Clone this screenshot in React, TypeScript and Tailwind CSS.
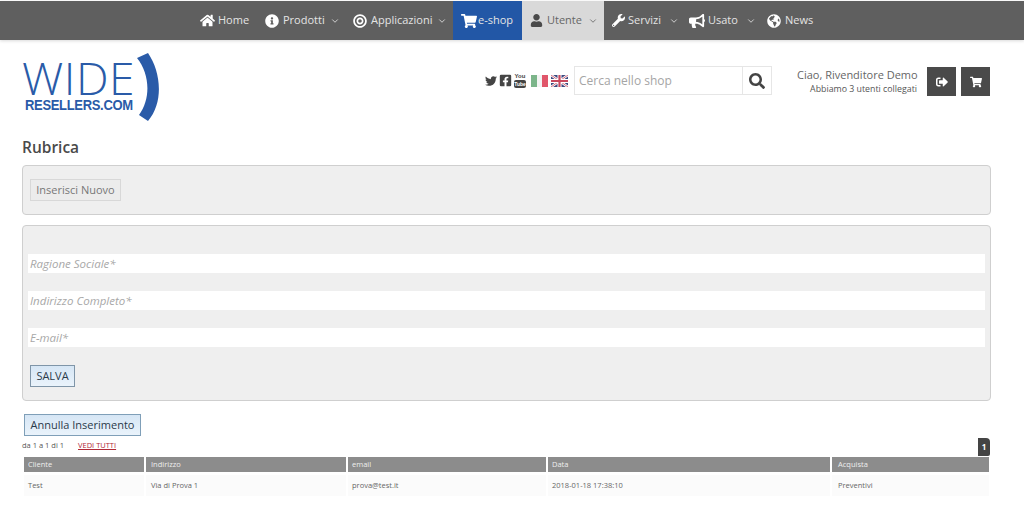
import React from 'react';
import { ChevronDown } from 'lucide-react';
import {
  FaHome, FaInfoCircle, FaShoppingCart, FaUser, FaWrench, FaBullhorn, FaGlobeAmericas,
  FaTwitter, FaFacebookSquare, FaSearch, FaSignOutAlt, FaBullseye,
} from 'react-icons/fa';

// voci del menu principale
const NAV = [
  { label: 'Home', icon: FaHome, iconSize: 15, gap: 'gap-[3px]', ml: 'ml-[200px]', w: 'w-[50px]', caret: false },
  { label: 'Prodotti', icon: FaInfoCircle, iconSize: 14, gap: 'gap-[4px]', ml: 'ml-[15px]', w: 'w-[73px]', caret: true },
  { label: 'Applicazioni', icon: FaBullseye, iconSize: 14, gap: 'gap-[4px]', ml: 'ml-[15px]', w: 'w-[91px]', caret: true },
];

const NAV_RIGHT = [
  { label: 'Servizi', icon: FaWrench, iconSize: 13, gap: 'gap-[3px]', ml: 'ml-[8px]', w: 'w-[65px]', caret: true },
  { label: 'Usato', icon: FaBullhorn, iconSize: 16, gap: 'gap-[3px]', ml: 'ml-[12px]', w: 'w-[64px]', caret: true },
  { label: 'News', icon: FaGlobeAmericas, iconSize: 14, gap: 'gap-[4px]', ml: 'ml-[14px]', w: 'w-[46px]', caret: false },
];

const COLS = [
  { label: 'Cliente', pad: 'pl-[4px]' },
  { label: 'Indirizzo', pad: 'pl-[5px]' },
  { label: 'email', pad: 'pl-[4px]' },
  { label: 'Data', pad: 'pl-[4px]' },
  { label: 'Acquista', pad: 'pl-[6px]' },
];
const ROW = ['Test', 'Via di Prova 1', 'prova@test.it', '2018-01-18 17:38:10', 'Preventivi'];

function Logo() {
  return (
    <div className="relative w-[140px] h-[72px] ml-[22px] mt-[12px] shrink-0">
      <div className="absolute left-0 top-[6px] text-[#2a5ba8] text-[44px] leading-[40px] font-[350] tracking-[0.5px] font-['Open_Sans',sans-serif] origin-left scale-x-[1.05]">
        WIDE
      </div>
      <div className="absolute left-[3px] top-[45px] text-[#2a5ba8] text-[15.5px] leading-[16px] font-bold font-['Liberation_Sans',sans-serif] tracking-[-0.4px] origin-left scale-x-[0.84] whitespace-nowrap">
        RESELLERS.COM
      </div>
      <svg className="absolute left-[112px] top-0" width="28" height="72" viewBox="0 0 28 72">
        <path d="M3 6 L14 1 C27 20 30 50 14 69 L5 63 C17 47 16 22 3 6 Z" fill="#2a5ba8" />
      </svg>
    </div>
  );
}

function Flags() {
  return (
    <div className="flex items-center gap-[3px] ml-[4px]">
      <div className="flex w-[17px] h-[12px]">
        <div className="w-[6px] bg-[#7cb58a]" />
        <div className="w-[5px] bg-[#f4f4f4]" />
        <div className="w-[6px] bg-[#e0566a]" />
      </div>
      <svg width="17" height="12" viewBox="0 0 17 12">
        <rect width="17" height="12" fill="#3d4a80" />
        <path d="M0 0 L17 12 M17 0 L0 12" stroke="#fff" strokeWidth="2.4" />
        <path d="M0 0 L17 12 M17 0 L0 12" stroke="#c8485e" strokeWidth="0.8" />
        <path d="M8.5 0 V12 M0 6 H17" stroke="#fff" strokeWidth="4" />
        <path d="M8.5 0 V12 M0 6 H17" stroke="#c8485e" strokeWidth="2.2" />
      </svg>
    </div>
  );
}

function Youtube() {
  return (
    <div className="flex flex-col items-center w-[12px] h-[15px] text-[#444] font-['Liberation_Sans',sans-serif] font-bold">
      <span className="text-[6px] leading-[6px]">You</span>
      <span className="bg-[#444] text-white rounded-[2px] w-full h-[8px] mt-[1px] text-[5px] leading-[8px] text-center">Tube</span>
    </div>
  );
}

export default function App() {
  return (
    <div className="w-[1024px] h-[512px] overflow-hidden bg-white font-['Open_Sans',sans-serif] text-[#444]">
      {/* --- menu --- */}
      <nav className="flex mt-px h-[39px] relative bg-[#5f5f5f] text-[11px] shadow-[0_1px_3px_rgba(0,0,0,0.15)]">
        {NAV.map((n) => (
          <div key={n.label} className={`flex items-center ${n.gap} ${n.ml} ${n.w} text-[#e4e4e4]`}>
            <n.icon size={n.iconSize} className="shrink-0 text-white" />
            <span>{n.label}</span>
            {n.caret && <ChevronDown size={10} className="ml-px shrink-0" />}
          </div>
        ))}
        <div className="ml-[9px] w-[69px] bg-[#2257a6] flex items-center gap-[1px] pl-[8px] text-[#e4e4e4]">
          <FaShoppingCart size={16} className="text-white shrink-0" />
          <span>e-shop</span>
        </div>
        <div className="w-[82px] bg-[#d9d9d9] flex items-center gap-[4px] pl-[8px] text-[#666]">
          <FaUser size={13} className="text-[#4a4a4a] shrink-0" />
          <span>Utente</span>
          <ChevronDown size={10} className="ml-[2px] shrink-0" />
        </div>
        {NAV_RIGHT.map((n) => (
          <div key={n.label} className={`flex items-center ${n.gap} ${n.ml} ${n.w} text-[#e4e4e4]`}>
            <n.icon size={n.iconSize} className="shrink-0 text-white" />
            <span>{n.label}</span>
            {n.caret && <ChevronDown size={10} className="ml-[5px] shrink-0" />}
          </div>
        ))}
      </nav>

      {/* --- testata --- */}
      <header className="flex h-[90px]">
        <Logo />
        <div className="flex items-center self-start mt-[26px] ml-[323px] h-[29px]">
          <div className="flex items-center gap-[2px] text-[#444] w-[42px]">
            <FaTwitter size={12} />
            <FaFacebookSquare size={13} />
            <Youtube />
          </div>
          <Flags />
          <div className="ml-[6px] w-[198px] h-[29px] border border-[#e6e6e6] flex">
            <div className="flex-1 pl-[4px] text-[12px] leading-[27px] text-[#a5a5a5]">Cerca nello shop</div>
            <div className="w-[29px] border-l border-[#e6e6e6] flex items-center justify-center">
              <FaSearch size={16} className="text-[#444]" />
            </div>
          </div>
        </div>
        <div className="mt-[28px] ml-[25px] w-[120px] text-right">
          <div className="text-[11px] leading-[14px] text-[#666] whitespace-nowrap">Ciao, Rivenditore Demo</div>
          <div className="text-[8.8px] leading-[14px] text-[#555] whitespace-nowrap">Abbiamo 3 utenti collegati</div>
        </div>
        <div className="flex gap-[5px] ml-[10px] mt-[27px] self-start">
          <div className="w-[29px] h-[29px] bg-[#4a4a4a] flex items-center justify-center text-white">
            <FaSignOutAlt size={12} />
          </div>
          <div className="w-[29px] h-[29px] bg-[#4a4a4a] flex items-center justify-center text-white">
            <FaShoppingCart size={12} />
          </div>
        </div>
      </header>

      <main className="px-[22px] w-[1013px]">
        <h1 className="mt-[6px] text-[15.5px] leading-[22px] font-semibold text-[#4a4a4a]">Rubrica</h1>

        <section className="mt-[7px] h-[50px] bg-[#efefef] border border-[#cfcfcf] rounded-[4px] pl-[7px] pt-[13px]">
          <button className="block w-[91px] h-[22px] bg-[#ececec] border border-[#d8d8d8] text-[11px] leading-[20px] text-[#777]">
            Inserisci Nuovo
          </button>
        </section>

        <section className="mt-[10px] h-[176px] bg-[#efefef] border border-[#cfcfcf] rounded-[4px] pl-[5px] pr-[5px] pt-[28px]">
          <div className="flex flex-col gap-[18px]">
            {['Ragione Sociale*', 'Indirizzo Completo*', 'E-mail*'].map((p) => (
              <div key={p} className="h-[19px] bg-white pl-[2px] text-[11.5px] leading-[19px] italic text-[#a8a8a8]">
                {p}
              </div>
            ))}
          </div>
          <button className="block mt-[18px] ml-[2px] w-[45px] h-[22px] bg-gradient-to-b from-[#d6e6f5] to-[#eaf3fb] border border-[#7f95a8] text-[11px] leading-[20px] text-[#2b3a4a]">
            SALVA
          </button>
        </section>

        <button className="block mt-[13px] ml-[2px] w-[117px] h-[22px] bg-gradient-to-b from-[#d6e6f5] to-[#eaf3fb] border border-[#7f9fb8] text-[11px] leading-[20px] text-[#2b3a4a]">
          Annulla Inserimento
        </button>

        <div className="relative flex h-[21px] text-[7.5px] leading-[18px] text-[#555]">
          <span>da 1 a 1 di 1</span>
          <span className="ml-[14px] text-[#b02a37] underline">VEDI TUTTI</span>
          <div className="absolute left-[956px] top-[2px] w-[12px] h-[18px] bg-[#444] rounded-tr-[4px] rounded-br-[2px] text-white text-[8px] leading-[18px] font-bold text-center">
            1
          </div>
        </div>

        <div className="ml-[2px] w-[965px] grid grid-cols-[120px_200px_198px_282px_157px] gap-x-[2px] text-[7.5px]">
          {COLS.map((c) => (
            <div key={c.label} className={`h-[15px] bg-[#8c8c8c] ${c.pad} leading-[15px] text-[#eeeeee]`}>
              {c.label}
            </div>
          ))}
          {ROW.map((c, i) => (
            <div key={c} className={`mt-[3px] h-[21px] bg-[#fbfbfb] ${COLS[i].pad} leading-[21px] text-[#666]`}>
              {c}
            </div>
          ))}
        </div>
      </main>
    </div>
  );
}
